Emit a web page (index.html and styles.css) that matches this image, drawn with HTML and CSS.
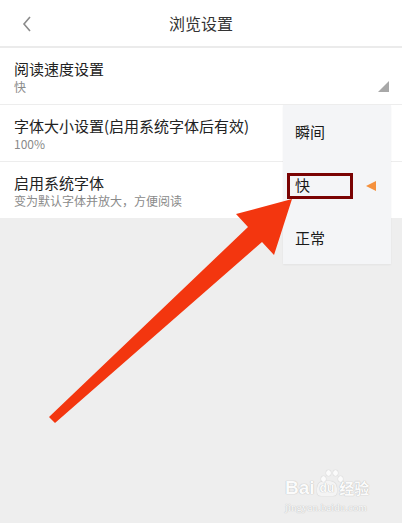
FILE: index.html
```html
<!DOCTYPE html>
<html lang="zh-CN">
<head>
    <meta charset="UTF-8">
    <meta name="viewport" content="width=device-width, initial-scale=1.0">
    <title>浏览设置</title>
    <link rel="stylesheet" href="styles.css">
</head>
<body>

<div class="screen">
    <div class="header">
        <span class="back">
            <svg width="10" height="16" viewBox="0 0 10 16">
                <polyline points="8,1 2,8 8,15" fill="none" stroke="#8a8a8a" stroke-width="1.6"/>
            </svg>
        </span>
        <h1>浏览设置</h1>
    </div>

    <div class="settings">
        <div class="row">
            <div class="row-title">阅读速度设置</div>
            <div class="row-sub">快</div>
            <span class="corner"></span>
        </div>
        <div class="row">
            <div class="row-title">字体大小设置(启用系统字体后有效)</div>
            <div class="row-sub">100%</div>
        </div>
        <div class="row">
            <div class="row-title">启用系统字体</div>
            <div class="row-sub">变为默认字体并放大，方便阅读</div>
        </div>
    </div>

    <!-- dropdown opened over the list -->
    <div class="menu">
        <div class="menu-item">瞬间</div>
        <div class="menu-item">快</div>
        <div class="menu-item">正常</div>
        <span class="mark-box"></span>
        <span class="mark-arrow"></span>
    </div>

    <svg class="pointer" width="402" height="523" viewBox="0 0 402 523">
        <polygon points="49,417 248,227 236,214 292,199 274,255 262,242 55,423" fill="#f3360f"/>
    </svg>

    <div class="watermark">
        <div class="wm-logo">
            <span class="wm-bai">Bai</span>
            <span class="wm-du">du</span>
            <span class="wm-cn">经验</span>
            <span class="paw"><i></i><i></i><i></i><i></i></span>
        </div>
        <div class="wm-url">jingyan.baidu.com</div>
    </div>
</div>

</body>
</html>
```

FILE: styles.css
```css
body {
    margin: 0;
    background-color: #eeeeee;
    font-family: "Noto Sans CJK SC", "Noto Sans", sans-serif;
}
.screen {
    position: relative;
    width: 402px;
    height: 523px;
    overflow: hidden;
    background-color: #eeeeee;
}
.header {
    height: 46px;
    background-color: #fff;
    border-bottom: 2px solid #ebebeb;
    display: flex;
    align-items: center;
    justify-content: center;
    position: relative;
}
.header h1 {
    margin: 0;
    font-size: 16px;
    font-weight: normal;
    color: #333;
}
.back {
    position: absolute;
    left: 22px;
    top: 13px;
}
.settings {
    background-color: #fff;
}
.row {
    position: relative;
    padding: 11px 14px 9px;
    border-bottom: 1px solid #ededed;
}
.row:last-child {
    border-bottom: none;
}
.row-title {
    font-size: 15px;
    line-height: 20px;
    color: #222;
}
.row-sub {
    font-size: 12px;
    line-height: 16px;
    color: #8a8a8a;
}
.corner {
    position: absolute;
    right: 13px;
    top: 33px;
    width: 0;
    height: 0;
    border-left: 11px solid transparent;
    border-bottom: 11px solid #a8a8a8;
}
.menu {
    position: absolute;
    left: 283px;
    top: 105px;
    width: 108px;
    height: 159px;
    background-color: #f4f5f7;
    box-shadow: 0 1px 2px rgba(0, 0, 0, 0.05);
}
.menu-item {
    height: 53px;
    line-height: 53px;
    padding-left: 12px;
    font-size: 15px;
    color: #1a1a1a;
}
.mark-box {
    position: absolute;
    left: 4px;
    top: 68px;
    width: 60px;
    height: 20px;
    border: 3px solid #7a0303;
}
.mark-arrow {
    position: absolute;
    left: 83px;
    top: 76px;
    width: 0;
    height: 0;
    border-top: 5px solid transparent;
    border-bottom: 5px solid transparent;
    border-right: 10px solid #f5913d;
}
.pointer {
    position: absolute;
    left: 0;
    top: 0;
}
.watermark {
    position: absolute;
    left: 285px;
    top: 469px;
    width: 92px;
    color: #fbfbfb;
    text-shadow: 0 0 1px #b8b8b8, 0 0 1px #c8c8c8;
}
.wm-logo {
    position: relative;
    display: flex;
    align-items: flex-end;
    height: 30px;
    font-family: "Liberation Sans", Arial, sans-serif;
}
.wm-bai {
    font-size: 19px;
    font-weight: bold;
    line-height: 22px;
}
.wm-du {
    margin-left: 2px;
    font-size: 12px;
    font-weight: bold;
    line-height: 15px;
    padding: 0 3px;
    margin-bottom: 3px;
    border-radius: 7px 7px 4px 4px;
    background-color: #f4f4f4;
    box-shadow: 0 0 1px #b8b8b8;
}
.wm-cn {
    margin-left: 2px;
    font-family: "Noto Sans CJK SC", sans-serif;
    font-size: 15px;
    font-weight: bold;
    line-height: 22px;
}
.paw {
    position: absolute;
    left: 35px;
    top: 1px;
    width: 24px;
    height: 12px;
}
.paw i {
    position: absolute;
    width: 5px;
    height: 6px;
    border-radius: 50%;
    background-color: #fbfbfb;
    box-shadow: 0 0 1px #b0b0b0;
}
.paw i:nth-child(1) { left: 1px; top: 6px; }
.paw i:nth-child(2) { left: 6px; top: 0; }
.paw i:nth-child(3) { left: 13px; top: 0; }
.paw i:nth-child(4) { left: 18px; top: 6px; }
.wm-url {
    font-family: "Liberation Serif", serif;
    font-size: 11px;
    line-height: 14px;
    margin-top: 1px;
}
```
